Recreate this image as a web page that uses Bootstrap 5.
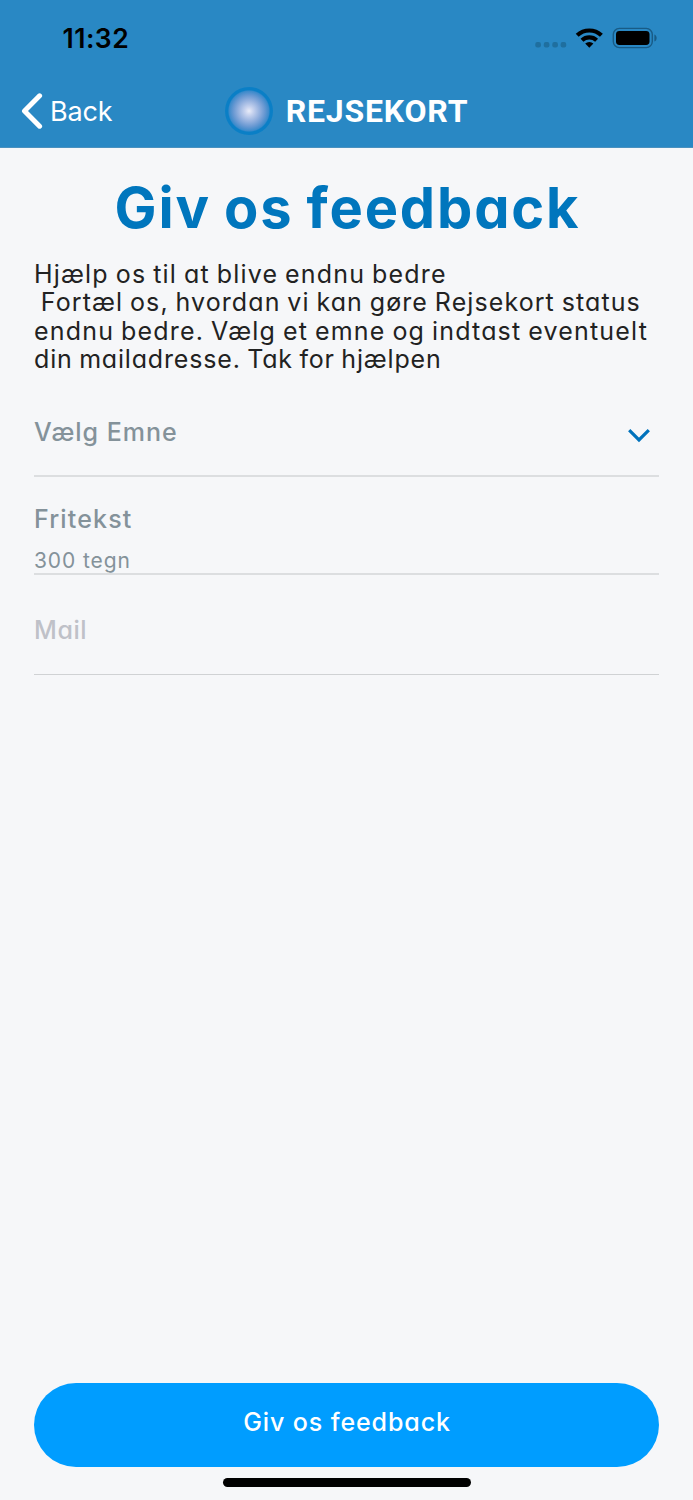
<!DOCTYPE html>
<html lang="da">
<head>
<meta charset="utf-8">
<meta name="viewport" content="width=device-width, initial-scale=1">
<title>Giv os feedback</title>
<link href="https://cdn.jsdelivr.net/npm/bootstrap@5.3.0/dist/css/bootstrap.min.css" rel="stylesheet">
<style>
body{background:#f6f7f9;font-family:Inter,sans-serif;font-feature-settings:"cv11";color:#222}
.screen{height:1500px}
.topbar{background:#2988c4;height:148px;border-bottom:1px solid #4a91bf}
.status{height:76px;padding:0 36px 0 62.5px}
.time{font-size:26.5px;font-weight:600;color:#000;line-height:1;letter-spacing:.5px;padding-top:1px}
.navline{height:70px;color:#fff}
.side{flex:1 1 0}
.back{padding-left:21px;font-size:27px;line-height:1;letter-spacing:-.2px;font-feature-settings:normal;gap:5px;color:#fff;text-decoration:none}
.brand{font-family:Roboto,sans-serif;font-size:32px;font-weight:700;line-height:1;letter-spacing:.8px;margin-left:13px}
.orb{width:48px;height:48px;background:radial-gradient(closest-side,#e9ecf8 0,#c6d2ee 18%,#93b0de 45%,#6798d2 66%,#3b8acb 83%,#0a7fc6 88%,#0a7fc6 100%)}
.content{padding:0 34px}
.title{font-size:56px;font-weight:700;color:#0076bd;line-height:68px;margin:26px 0 0;padding-left:2px;letter-spacing:1.85px;word-spacing:-2px}
.intro{font-size:25px;font-weight:400;line-height:28.5px;margin:17.6px 0 .4px;letter-spacing:1.18px;word-spacing:-1.3px;white-space:pre-line}
.intro-lead{letter-spacing:1.09px}
.intro-last{letter-spacing:.82px}
.field{border-bottom:2px solid #dcdee0;font-size:25px;font-weight:500;color:#84929a;line-height:30px;letter-spacing:1px}
.field-topic{padding-top:43px;height:103px}
.field-text{padding-top:27px;height:98px;letter-spacing:1.15px}
.field-mail{padding-top:40px;height:100px;border-bottom-width:1px;border-color:#d0d2d4;color:#bfc1c8;letter-spacing:.6px}
.hint{font-size:21px;font-weight:400;line-height:25px;margin-top:14px;letter-spacing:.9px}
.chev{margin:12px 9px 0 0}
.bottom{padding:0 34px 13.5px}
.send,.send:hover{height:83.5px;border-radius:42px;background:#009dff;color:#fff;font-size:25px;font-weight:500;font-feature-settings:"cv11";letter-spacing:.9px;padding:0 0 4px 1px}
.homebar{width:248px;height:8.5px;border-radius:5px;background:#000;margin:11.5px auto 0}
</style>
</head>
<body>
<div class="screen d-flex flex-column">
  <header class="topbar">
    <div class="status d-flex align-items-center justify-content-between">
      <span class="time">11:32</span>
      <svg width="122" height="24" viewBox="535 26 122 24" aria-hidden="true">
        <g fill="#1f6f9f"><rect x="535.3" y="42" width="5.6" height="5.6" rx="2"/><rect x="543.8" y="42" width="5.6" height="5.6" rx="2"/><rect x="552.3" y="42" width="5.6" height="5.6" rx="2"/><rect x="560.6" y="42" width="5.6" height="5.6" rx="2"/></g>
        <g fill="none" stroke="#000" stroke-width="4.2"><path d="M577.2 35.3a17.6 17.6 0 0 1 24.2 0"/><path d="M582 40.3a10.6 10.6 0 0 1 14.6 0"/></g>
        <path d="M585.2 43.5a6 6 0 0 1 8.2 0L589.3 47.7z"/>
        <rect x="613.3" y="28.4" width="39" height="19.2" rx="6" fill="none" stroke="#185b86" stroke-width="1.4"/>
        <rect x="616" y="31" width="33.5" height="14" rx="3.4"/>
        <path d="M654.4 34.4c3 1 3 6 0 7z" fill="#185b86"/>
      </svg>
    </div>
    <nav class="navline d-flex align-items-center">
      <div class="side"><a class="back d-flex align-items-center" href="#">
        <svg width="24" height="36" viewBox="0 0 24 36" fill="none" stroke="#fff" stroke-width="5" stroke-linecap="round" stroke-linejoin="round" aria-hidden="true"><path d="M18.6 2.8 3.5 18l15.1 15.2"/></svg>
        <span>Back</span></a></div>
      <div class="orb rounded-circle"></div><span class="brand">REJSEKORT</span>
      <div class="side"></div>
    </nav>
  </header>
  <main class="content flex-grow-1">
    <h1 class="title text-center">Giv os feedback</h1>
    <p class="intro">Hjælp os til at blive endnu bedre<br><span class="intro-lead">&nbsp;Fortæl os, hvordan vi kan gøre Rejsekort status</span> endnu bedre. Vælg et emne og indtast eventuelt <span class="intro-last">din mailadresse. Tak for hjælpen</span></p>
    <div class="field field-topic d-flex justify-content-between align-items-start">
      <span>Vælg Emne</span>
      <svg class="chev" width="22" height="14" viewBox="0 0 22 14" fill="none" stroke="#0072bc" stroke-width="3.2" aria-hidden="true"><path d="m1.2 1.2 9.8 9.8 9.8-9.8"/></svg>
    </div>
    <div class="field field-text">Fritekst<div class="hint">300 tegn</div></div>
    <div class="field field-mail">Mail</div>
  </main>
  <footer class="bottom">
    <button class="btn send w-100 border-0 d-block" type="button">Giv os feedback</button>
    <div class="homebar"></div>
  </footer>
</div>
<script src="https://cdn.jsdelivr.net/npm/bootstrap@5.3.0/dist/js/bootstrap.bundle.min.js"></script>
</body>
</html>
